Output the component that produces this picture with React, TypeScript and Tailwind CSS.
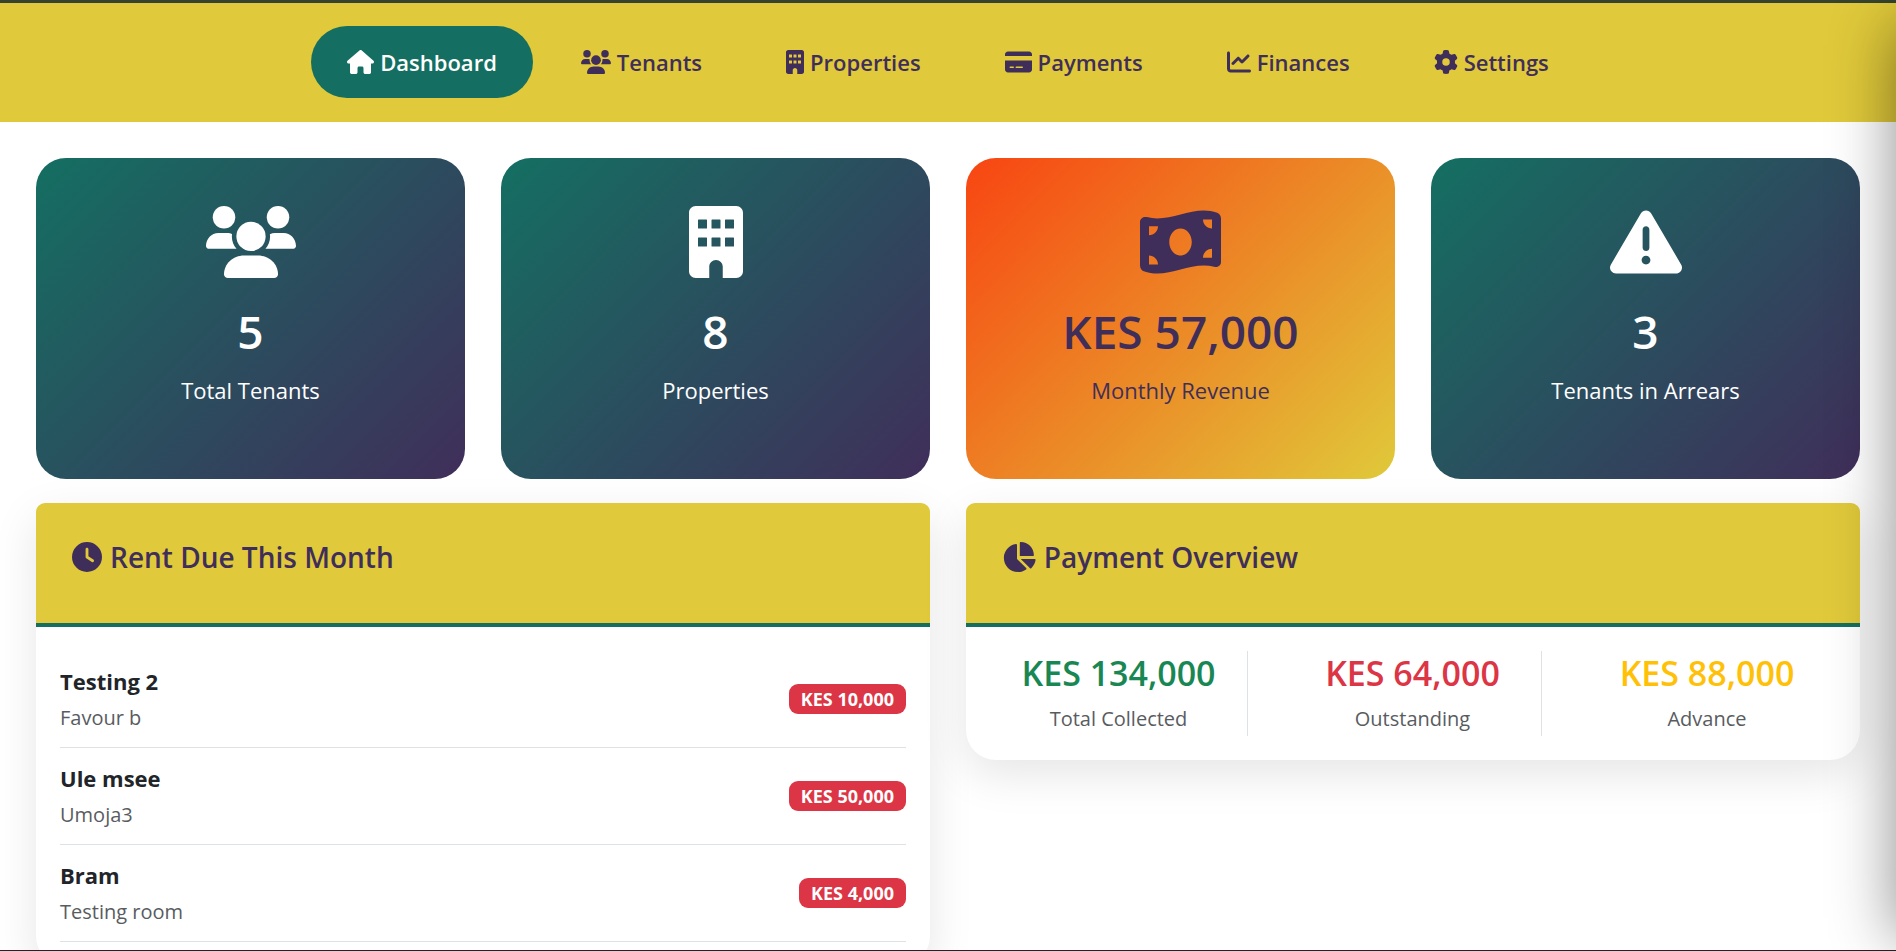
import React, { useState } from 'react'
import { FaChartLine, FaChartPie, FaClock, FaCreditCard, FaGear, FaHouse, FaMoneyBillWave } from 'react-icons/fa6'

type IconProps = { className?: string }

function TenantsIcon({ className }: IconProps) {
    return (
        <svg viewBox="0 0 640 512" fill="currentColor" className={className} aria-hidden="true">
            <circle cx="320" cy="216" r="104" />
            <circle cx="512" cy="80" r="80" />
            <circle cx="128" cy="80" r="80" />
            <path d="M369.9 352H270.1C191.6 352 128 411.7 128 485.3C128 500.1 140.7 512 156.4 512h327.2C499.3 512 512 500.1 512 485.3C512 411.7 448.4 352 369.9 352z" />
            <path d="M183.9 216c0-5.4 1-10.6 1.6-15.9C174.6 194.1 162.6 192 149.9 192H88.1C39.4 192 0 233.8 0 285.3C0 295.6 7.9 304 17.6 304h199.5C196.7 280.2 183.9 249.7 183.9 216z" />
            <path d="M551.9 192h-61.8c-12.8 0-24.9 3-35.9 8.2C454.8 205.5 455.8 210.6 455.8 216c0 33.7-12.8 64.2-33.2 88h199.7C632.1 304 640 295.6 640 285.3C640 233.8 600.6 192 551.9 192z" />
        </svg>
    )
}

function BuildingIcon({ className }: IconProps) {
    return (
        <svg viewBox="0 0 384 512" fill="currentColor" fillRule="evenodd" className={className} aria-hidden="true">
            <path d="M48 0C21.5 0 0 21.5 0 48V464c0 26.5 21.5 48 48 48h96V432c0-26.5 21.5-48 48-48s48 21.5 48 48v80h96c26.5 0 48-21.5 48-48V48c0-26.5-21.5-48-48-48H48zM68 96h56q4 0 4 4v56q0 4-4 4H68q-4 0-4-4v-56q0-4 4-4zM164 96h56q4 0 4 4v56q0 4-4 4h-56q-4 0-4-4v-56q0-4 4-4zM260 96h56q4 0 4 4v56q0 4-4 4h-56q-4 0-4-4v-56q0-4 4-4zM68 224h56q4 0 4 4v56q0 4-4 4H68q-4 0-4-4v-56q0-4 4-4zM164 224h56q4 0 4 4v56q0 4-4 4h-56q-4 0-4-4v-56q0-4 4-4zM260 224h56q4 0 4 4v56q0 4-4 4h-56q-4 0-4-4v-56q0-4 4-4z" />
        </svg>
    )
}

function WarningIcon({ className }: IconProps) {
    return (
        <svg viewBox="0 0 512 512" fill="currentColor" className={className} aria-hidden="true">
            <path d="M506.3 417l-213.3-364c-16.33-28-57.54-28-73.98 0l-213.2 364C-10.59 444.9 9.849 480 42.74 480h426.6C502.1 480 522.6 445 506.3 417zM232 168c0-13.25 10.75-24 24-24S280 154.8 280 168v128c0 13.25-10.75 24-23.1 24S232 309.3 232 296V168zM256 416c-17.36 0-31.44-14.08-31.44-31.44c0-17.36 14.07-31.44 31.44-31.44s31.44 14.08 31.44 31.44C287.4 401.9 273.4 416 256 416z" />
        </svg>
    )
}

// the glyphs are not all square, so each one carries its own aspect ratio
const navItems = [
    { label: 'Dashboard', icon: FaHouse, shape: 'aspect-[9/8]' },
    { label: 'Tenants', icon: TenantsIcon, shape: 'aspect-[5/4]' },
    { label: 'Properties', icon: BuildingIcon, shape: 'aspect-[3/4]' },
    { label: 'Payments', icon: FaCreditCard, shape: 'aspect-[9/8]' },
    { label: 'Finances', icon: FaChartLine, shape: 'aspect-square' },
    { label: 'Settings', icon: FaGear, shape: 'aspect-square' },
]

const teal = 'bg-[linear-gradient(135deg,#146f62,#402e5a)] text-white'
const sunset = 'bg-[linear-gradient(135deg,#f84512,#e0c93a)] text-[#402e5a]'

const stats = [
    { value: '5', label: 'Total Tenants', icon: TenantsIcon, shape: 'aspect-[5/4]', tone: teal },
    { value: '8', label: 'Properties', icon: BuildingIcon, shape: 'aspect-[3/4]', tone: teal },
    { value: 'KES 57,000', label: 'Monthly Revenue', icon: FaMoneyBillWave, shape: 'aspect-[9/8]', tone: sunset },
    { value: '3', label: 'Tenants in Arrears', icon: WarningIcon, shape: 'aspect-square', tone: teal },
]

const rentDue = [
    { name: 'Testing 2', unit: 'Favour b', amount: 'KES 10,000' },
    { name: 'Ule msee', unit: 'Umoja3', amount: 'KES 50,000' },
    { name: 'Bram', unit: 'Testing room', amount: 'KES 4,000' },
]

const overview = [
    { amount: 'KES 134,000', label: 'Total Collected', color: 'text-[#198754]' },
    { amount: 'KES 64,000', label: 'Outstanding', color: 'text-[#dc3545]' },
    { amount: 'KES 88,000', label: 'Advance', color: 'text-[#ffc107]' },
]

type PanelProps = {
    title: string
    icon: React.ElementType
    shape: string
    children: React.ReactNode
}

function Panel({ title, icon: Icon, shape, children }: PanelProps) {
    return (
        <section className="rounded-t-[9px] rounded-b-[30px] bg-white shadow-[0_15px_45px_rgba(0,0,0,0.1)]">
            <header className="rounded-t-[9px] border-b-4 border-[#146f62] bg-[#e0c93a] px-9 pt-9 pb-12 text-[#402e5a]">
                <h5 className="flex items-center gap-2 text-[28px] leading-9 font-semibold">
                    <Icon className={`h-[30px] w-auto ${shape}`} />
                    {title}
                </h5>
            </header>
            <div className="p-6">{children}</div>
        </section>
    )
}

export default function App() {
    const [active, setActive] = useState('Dashboard')

    return (
        <div className="relative flex h-screen flex-col overflow-hidden bg-white font-['Open_Sans','Noto_Sans',sans-serif] text-[#212529]">
            <div className="h-[3px] shrink-0 bg-[#35432f]" />

            <nav className="flex shrink-0 justify-center gap-3 bg-[#e0c93a] pt-[23px] pb-6">
                {navItems.map(({ label, icon: Icon, shape }) => (
                    <a
                        key={label}
                        href={`#${label.toLowerCase()}`}
                        onClick={() => setActive(label)}
                        className={`flex h-[72px] items-center gap-1.5 rounded-[36px] px-9 text-[22px] font-semibold ${active === label ? 'bg-[#146f62] text-white' : 'text-[#402e5a]'}`}
                    >
                        <Icon className={`h-6 w-auto ${shape}`} />
                        {label}
                    </a>
                ))}
            </nav>

            <main className="min-h-0 flex-1 overflow-hidden px-9 pt-9">
                <div className="grid grid-cols-4 gap-9">
                    {stats.map(({ value, label, icon: Icon, shape, tone }) => (
                        <div key={label} className={`flex flex-col items-center rounded-[30px] pt-12 pb-[71px] ${tone}`}>
                            <Icon className={`h-[72px] w-auto ${shape}`} />
                            <h3 className="mt-6 text-[46px] leading-[58px] font-semibold">{value}</h3>
                            <p className="mt-3 text-[22px] leading-9">{label}</p>
                        </div>
                    ))}
                </div>

                <div className="mt-6 grid grid-cols-2 items-start gap-9">
                    <Panel title="Rent Due This Month" icon={FaClock} shape="aspect-square">
                        <ul>
                            {rentDue.map(({ name, unit, amount }) => (
                                <li key={name} className="flex items-center justify-between border-b border-[#dee2e6] py-3">
                                    <div>
                                        <h6 className="text-[22px] leading-9 font-bold">{name}</h6>
                                        <p className="pt-0.5 text-xl leading-[34px] text-[#595c5f]">{unit}</p>
                                    </div>
                                    <span className="rounded-[9px] bg-[#dc3545] px-3 text-lg leading-[30px] font-bold text-white">{amount}</span>
                                </li>
                            ))}
                        </ul>
                    </Panel>

                    <Panel title="Payment Overview" icon={FaChartPie} shape="aspect-[9/8]">
                        <div className="grid grid-cols-3 gap-9 text-center">
                            {overview.map(({ amount, label, color }) => (
                                <div key={label} className="border-r border-[#dee2e6] last:border-r-0">
                                    <h4 className={`text-[34px] leading-11 font-semibold ${color}`}>{amount}</h4>
                                    <p className="pt-[7px] text-xl leading-[34px] text-[#595c5f]">{label}</p>
                                </div>
                            ))}
                        </div>
                    </Panel>
                </div>
            </main>

            <div className="h-px shrink-0 bg-[#212529]" />

            {/* drawer parked off the right edge, only its shadow shows */}
            <aside className="pointer-events-none absolute top-6 bottom-3 left-full w-80 shadow-[0_0_60px_rgba(0,0,0,0.45)]" />
        </div>
    )
}
